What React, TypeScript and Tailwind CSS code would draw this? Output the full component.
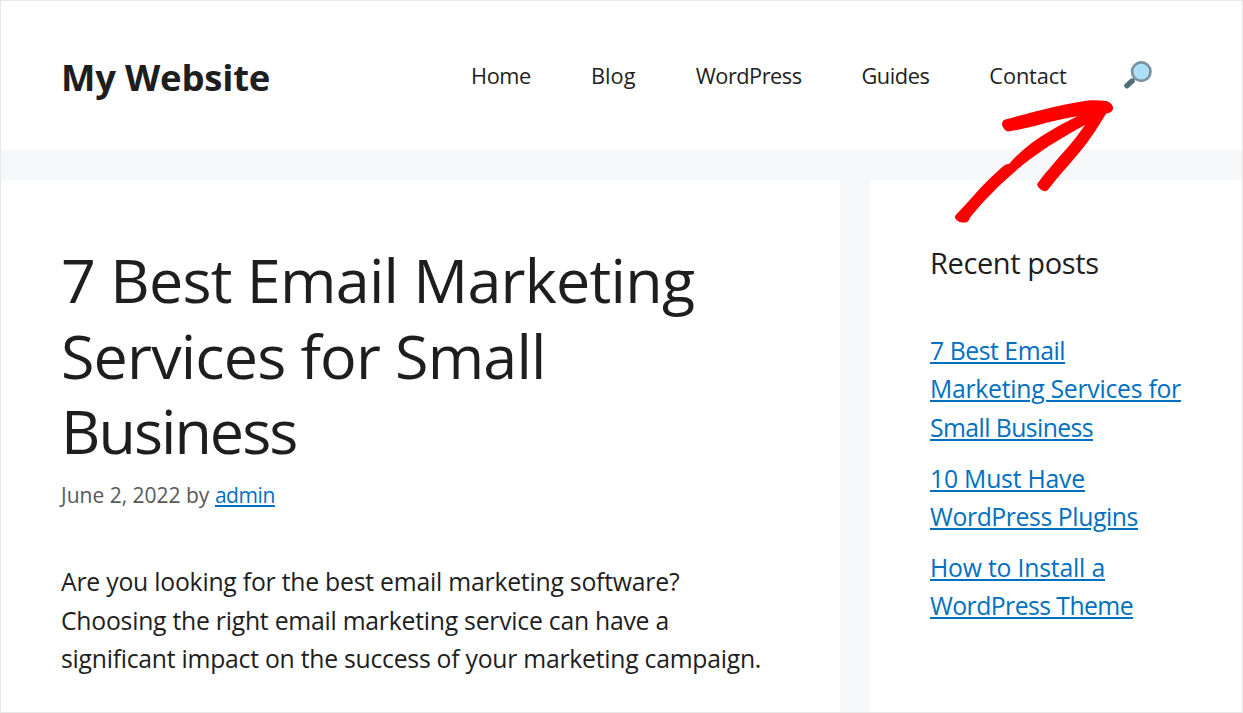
const navItems = [
  { label: 'Home', tracking: 'tracking-[-0.4px]' },
  { label: 'Blog', tracking: 'tracking-[0.1px]' },
  { label: 'WordPress', tracking: 'tracking-[-0.5px]' },
  { label: 'Guides', tracking: 'tracking-[-0.45px]' },
  { label: 'Contact', tracking: 'tracking-[-0.12px]' },
]

const titleLines = [
  { text: '7 Best Email Marketing', tracking: 'tracking-[-0.74px]' },
  { text: 'Services for Small', tracking: 'tracking-[-0.83px]' },
  { text: 'Business', tracking: 'tracking-[-1.97px]' },
]

const introLines = [
  { text: 'Are you looking for the best email marketing software?', tracking: 'tracking-[-0.22px]' },
  { text: 'Choosing the right email marketing service can have a', tracking: 'tracking-[-0.24px]' },
  { text: 'significant impact on the success of your marketing campaign.', tracking: 'tracking-[-0.25px]' },
]

const recentPosts = [
  [
    { text: '7 Best Email', tracking: 'tracking-[-0.45px]' },
    { text: 'Marketing Services for', tracking: 'tracking-[-0.26px]' },
    { text: 'Small Business', tracking: 'tracking-[-0.57px]' },
  ],
  [
    { text: '10 Must Have', tracking: 'tracking-[-0.21px]' },
    { text: 'WordPress Plugins', tracking: 'tracking-[-0.41px]' },
  ],
  [
    { text: 'How to Install a', tracking: 'tracking-[-0.19px]' },
    { text: 'WordPress Theme', tracking: 'tracking-[-0.56px]' },
  ],
]

const linkClass = 'text-[#0170c1] underline decoration-2 underline-offset-[2px]'

function SearchIcon() {
  return (
    <svg viewBox="0 0 30 30" className="w-[30px] h-[30px]" aria-hidden="true">
      <path d="M12.5 17.5 L9.5 20.5" stroke="#8a9ba5" strokeWidth="2.4" />
      <path d="M9 21 L3.9 25.7" stroke="#546e7a" strokeWidth="5.4" strokeLinecap="round" />
      <circle cx="18.3" cy="11.6" r="9.2" fill="#aedff8" stroke="#7b929e" strokeWidth="2.7" />
    </svg>
  )
}

function Arrow() {
  return (
    <svg
      viewBox="0 0 720 600"
      className="absolute left-[939px] top-[39px] w-[240px] h-[200px] pointer-events-none"
      aria-hidden="true"
    >
      <path
        fill="#ff0000"
        d="M187 248 C187 243 192 240 199 238 C280 215 370 191 440 182 C462 180 480 181 497 183 C510 185 519 194 519 204 C519 214 511 219 499 220 C480 250 465 277 441 308 C405 356 357 405 325 448 C321 455 312 455 303 449 C295 443 290 437 292 431 C325 388 355 354 381 325 C405 298 420 276 435 255 C380 285 320 320 270 358 C204 408 140 471 92 530 C88 536 87 543 81 546 C70 550 57 547 49 539 C44 534 43 529 48 524 C75 497 95 474 118 448 C144 419 170 397 193 376 C198 372 203 373 208 371 C222 355 239 338 261 320 C309 283 361 254 412 229 C350 237 275 264 208 274 C201 275 194 270 190 263 C186 257 185 253 187 248 Z"
      />
    </svg>
  )
}

export default function App() {
  return (
    <div className="relative flex flex-col w-[1243px] h-[713px] overflow-hidden border border-[#e8e8e8] bg-[#f7f8fa] font-['Open_Sans',sans-serif] text-[#1e1e1e] whitespace-nowrap">
      <header className="flex items-start h-[149px] shrink-0 bg-white pl-[60px]">
        <a href="#" className="w-[410px] mt-[54px] text-[36.5px] leading-[45px] font-bold tracking-[-0.22px]">
          My Website
        </a>
        <nav className="flex items-center gap-[60px] mt-[30px] h-[90px] text-[21.75px] leading-[90px]">
          {navItems.map((item) => (
            <a key={item.label} href="#" className={item.tracking}>
              {item.label}
            </a>
          ))}
        </nav>
        <button type="button" aria-label="Search" className="ml-[56px] mt-[59px]">
          <SearchIcon />
        </button>
      </header>

      <div className="flex flex-1 gap-[30px] mt-[30px]">
        <main className="w-[839px] shrink-0 bg-white pl-[60px] pt-[62px]">
          <h1 className="text-[61px] leading-[75.6px]">
            {titleLines.map((line) => (
              <span key={line.text} className={`block ${line.tracking}`}>
                {line.text}
              </span>
            ))}
          </h1>
          <div className="mt-[10.5px] text-[21px] leading-[32.5px] text-[#595959]">
            June 2, 2022 by{' '}
            <a href="#" className={`${linkClass} tracking-[-0.43px]`}>
              admin
            </a>
          </div>
          <p className="mt-[51.5px] text-[24.75px] leading-[38.25px]">
            {introLines.map((line) => (
              <span key={line.text} className={`block ${line.tracking}`}>
                {line.text}
              </span>
            ))}
          </p>
        </main>

        <aside className="flex-1 bg-white pl-[60px] pt-[60px]">
          <h2 className="text-[29px] leading-[45px] tracking-[-0.38px]">Recent posts</h2>
          <ul className="mt-[47px] space-y-[12.75px] text-[24.75px] leading-[38.25px]">
            {recentPosts.map((lines) => (
              <li key={lines[0].text}>
                <a href="#">
                  {lines.map((line) => (
                    <span key={line.text} className="block">
                      <span className={`${linkClass} ${line.tracking}`}>{line.text}</span>
                    </span>
                  ))}
                </a>
              </li>
            ))}
          </ul>
        </aside>
      </div>

      <Arrow />
    </div>
  )
}
